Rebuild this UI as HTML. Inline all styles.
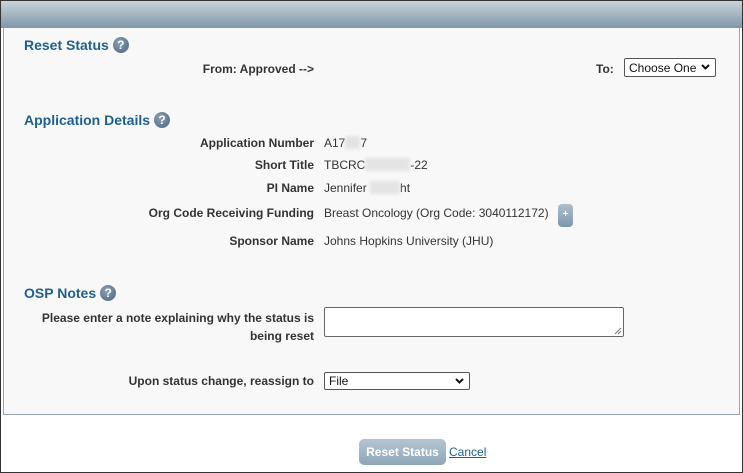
<!DOCTYPE html>
<html><head><style>
*{margin:0;padding:0;box-sizing:border-box}
body{width:743px;height:473px;position:relative;background:#fff;font-family:"Liberation Sans",Arial,sans-serif;font-size:12px;color:#222;overflow:hidden}
.frame{position:absolute;left:0;top:0;width:743px;height:473px;border:1px solid #333}
.hdr{position:absolute;left:1px;top:1px;width:741px;height:27px;background:linear-gradient(#c9d3da,#7f97a7)}
.panel{position:absolute;left:3px;top:28px;width:737px;height:387px;background:#f8f8f8;border:1px solid #9aa5ad;border-top:none}
.h{position:absolute;left:24px;font-weight:bold;font-size:14px;color:#1f5f8f}
.q{display:inline-block;width:16px;height:16px;border-radius:50%;background:radial-gradient(circle at 40% 35%,#8a9fb2,#4b6580);color:#fff;font-size:12px;text-align:center;line-height:16px;vertical-align:1px;margin-left:4px}
.l{position:absolute;right:429px;font-weight:bold;text-align:right;color:#333}
.v{position:absolute;left:324px;color:#333}
.blur{display:inline-block;background:#e4e4e4;height:13px;vertical-align:-2px;filter:blur(1.5px)}
.chev{position:absolute;right:5px;top:5px}
</style></head><body>
<div class="frame"></div>
<div class="hdr"></div>
<div class="panel"></div>
<div class="h" style="top:37px">Reset Status<span class="q">?</span></div>
<div class="l" style="top:62px">From: Approved --&gt;</div>
<div style="position:absolute;left:596px;top:62px;font-weight:bold;color:#333">To:</div>
<div style="position:absolute;left:624px;top:58px;width:92px;height:19px;border:1px solid #555;border-radius:2px;background:#fff;padding:2px 0 0 4px;color:#111">Choose One<svg class="chev" width="9" height="6" viewBox="0 0 9 6"><path d="M1 1L4.5 4.5L8 1" fill="none" stroke="#111" stroke-width="2"/></svg></div>
<div class="h" style="top:112px">Application Details<span class="q">?</span></div>
<div class="l" style="top:136px">Application Number</div>
<div class="v" style="top:136px">A17<span class="blur" style="width:15px"></span>7</div>
<div class="l" style="top:158px">Short Title</div>
<div class="v" style="top:158px">TBCRC<span class="blur" style="width:45px"></span>-22</div>
<div class="l" style="top:181px">PI Name</div>
<div class="v" style="top:181px">Jennifer <span class="blur" style="width:30px"></span>ht</div>
<div class="l" style="top:206px">Org Code Receiving Funding</div>
<div class="v" style="top:206px">Breast Oncology (Org Code: 3040112172)</div>
<div style="position:absolute;left:558px;top:204px;width:15px;height:23px;border-radius:4px;background:linear-gradient(#aebfcc,#7e97aa);color:#fff;font-size:10px;text-align:center;line-height:21px;font-weight:bold">+</div>
<div class="l" style="top:234px">Sponsor Name</div>
<div class="v" style="top:234px">Johns Hopkins University (JHU)</div>
<div class="h" style="top:285px">OSP Notes<span class="q">?</span></div>
<div class="l" style="top:309px;line-height:18px">Please enter a note explaining why the status is<br>being reset</div>
<div style="position:absolute;left:324px;top:307px;width:300px;height:30px;border:1px solid #666;border-radius:2px;background:#fff"><svg style="position:absolute;right:1px;bottom:1px" width="8" height="8"><path d="M7 1L1 7M7 4L4 7" stroke="#777" stroke-width="1"/></svg></div>
<div class="l" style="top:374px">Upon status change, reassign to</div>
<div style="position:absolute;left:324px;top:372px;width:146px;height:18px;border:1px solid #555;border-radius:2px;background:#fff;padding:1px 0 0 4px;color:#111">File<svg class="chev" width="9" height="6" viewBox="0 0 9 6"><path d="M1 1L4.5 4.5L8 1" fill="none" stroke="#111" stroke-width="2"/></svg></div>
<div style="position:absolute;left:359px;top:439px;width:87px;height:26px;border-radius:5px;background:linear-gradient(#b4c5d2,#8ea6b8);color:#fff;font-weight:bold;text-align:center;line-height:26px">Reset Status</div>
<div style="position:absolute;left:449px;top:445px;color:#1f5f8f;text-decoration:underline">Cancel</div>
</body></html>
